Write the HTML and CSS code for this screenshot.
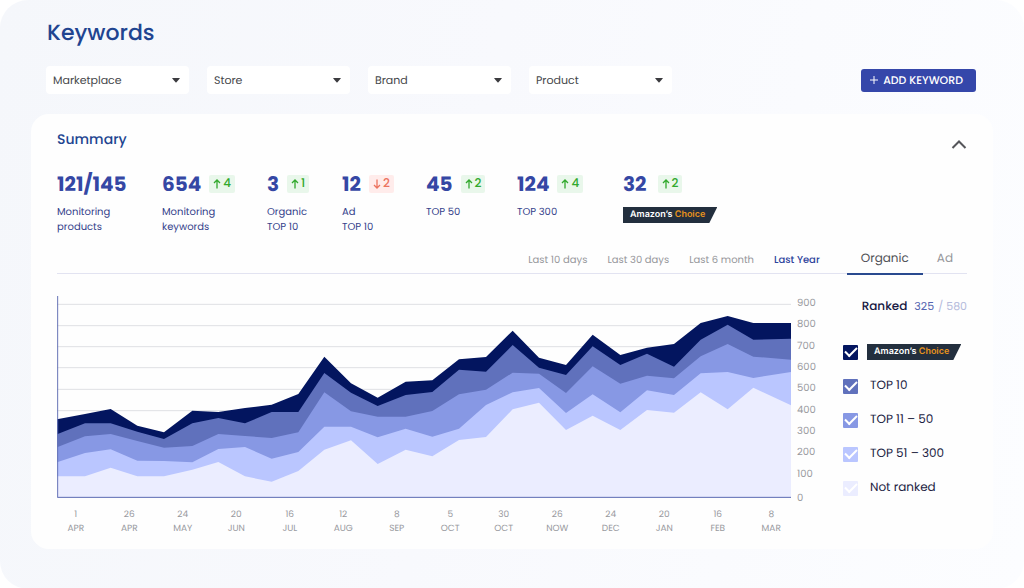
FILE: index.html
```html
<!DOCTYPE html>
<html lang="en">
<head>
<meta charset="utf-8">
<meta name="viewport" content="width=device-width, initial-scale=1">
<title>Keywords</title>
<link rel="stylesheet" href="styles.css">
</head>
<body>
<main class="page">
  <h1 class="page-title">Keywords</h1>
  <div class="toolbar">
    <div class="filters">
      <div class="filter"><select class="filter-select" aria-label="Marketplace"><option>Marketplace</option></select><svg class="caret" viewBox="0 0 8 5" aria-hidden="true"><path d="M0.5 0h7q.6 0 .2.5L4.5 4.2q-.5.5-1 0L.3.5Q-.1 0 .5 0z"/></svg></div>
      <div class="filter"><select class="filter-select" aria-label="Store"><option>Store</option></select><svg class="caret" viewBox="0 0 8 5" aria-hidden="true"><path d="M0.5 0h7q.6 0 .2.5L4.5 4.2q-.5.5-1 0L.3.5Q-.1 0 .5 0z"/></svg></div>
      <div class="filter"><select class="filter-select" aria-label="Brand"><option>Brand</option></select><svg class="caret" viewBox="0 0 8 5" aria-hidden="true"><path d="M0.5 0h7q.6 0 .2.5L4.5 4.2q-.5.5-1 0L.3.5Q-.1 0 .5 0z"/></svg></div>
      <div class="filter"><select class="filter-select" aria-label="Product"><option>Product</option></select><svg class="caret" viewBox="0 0 8 5" aria-hidden="true"><path d="M0.5 0h7q.6 0 .2.5L4.5 4.2q-.5.5-1 0L.3.5Q-.1 0 .5 0z"/></svg></div>
    </div>
    <button class="add-button" type="button"><svg class="plus" viewBox="0 0 8 8" aria-hidden="true"><path d="M4 0v8M0 4h8"/></svg>ADD KEYWORD</button>
  </div>

  <section class="card">
    <header class="card-head">
      <h2 class="card-title">Summary</h2>
      <button class="collapse" type="button" aria-label="Collapse"><svg class="chevron" viewBox="0 0 16 10" aria-hidden="true"><path d="M1.500 8.500L8 2l6.500 6.500"/></svg></button>
    </header>

    <div class="stats">
      <div class="stat"><div class="stat-top"><strong class="stat-value">121/145</strong></div><p class="stat-label">Monitoring<br>products</p></div>
      <div class="stat"><div class="stat-top"><strong class="stat-value">654</strong><span class="delta"><svg class="arrow" viewBox="0 0 8 10" aria-hidden="true"><path d="M4 9.500V1M1 4l3-3 3 3"/></svg>4</span></div><p class="stat-label">Monitoring<br>keywords</p></div>
      <div class="stat"><div class="stat-top"><strong class="stat-value">3</strong><span class="delta"><svg class="arrow" viewBox="0 0 8 10" aria-hidden="true"><path d="M4 9.500V1M1 4l3-3 3 3"/></svg>1</span></div><p class="stat-label">Organic<br>TOP 10</p></div>
      <div class="stat"><div class="stat-top"><strong class="stat-value">12</strong><span class="delta delta-down"><svg class="arrow" viewBox="0 0 8 10" aria-hidden="true"><path d="M4 .5V9M1 6l3 3 3-3"/></svg>2</span></div><p class="stat-label">Ad<br>TOP 10</p></div>
      <div class="stat"><div class="stat-top"><strong class="stat-value">45</strong><span class="delta"><svg class="arrow" viewBox="0 0 8 10" aria-hidden="true"><path d="M4 9.500V1M1 4l3-3 3 3"/></svg>2</span></div><p class="stat-label">TOP 50</p></div>
      <div class="stat"><div class="stat-top"><strong class="stat-value">124</strong><span class="delta"><svg class="arrow" viewBox="0 0 8 10" aria-hidden="true"><path d="M4 9.500V1M1 4l3-3 3 3"/></svg>4</span></div><p class="stat-label">TOP 300</p></div>
      <div class="stat"><div class="stat-top stat-top-wide"><strong class="stat-value">32</strong><span class="delta"><svg class="arrow" viewBox="0 0 8 10" aria-hidden="true"><path d="M4 9.500V1M1 4l3-3 3 3"/></svg>2</span></div><span class="choice">Amazon’s <span class="choice-accent">Choice</span></span></div>
    </div>

    <div class="tabs">
      <div class="ranges">
        <button class="range" type="button">Last 10 days</button>
        <button class="range" type="button">Last 30 days</button>
        <button class="range" type="button">Last 6 month</button>
        <button class="range range-active" type="button">Last Year</button>
      </div>
      <div class="kinds">
        <button class="kind kind-active" type="button">Organic</button>
        <button class="kind" type="button">Ad</button>
      </div>
    </div>

    <div class="report">
      <div class="chart">
        <div class="plot-row">
          <svg class="plot" viewBox="0 0 2202 606" preserveAspectRatio="none" role="img" aria-label="Keyword ranking over the last year">
            <g transform="translate(0,-33)">
              <path class="gridline" d="M0 58H2202M0 122H2202M0 185H2202M0 248H2202M0 313H2202M0 377H2202"/>
              <polygon fill="#03155f" points="0,403 84,387 161,372 241,422 321,442 406,377 484,381 564,369 644,359 724,327 802,215 882,295 962,338 1046,290 1126,286 1206,223 1287,216 1367,137 1446,218 1527,240 1607,149 1690,210 1770,188 1851,177 1931,114 2012,93 2089,114 2202,114 2202,637 0,637"/>
              <polygon fill="#6071bc" points="0,448 84,415 161,415 241,440 321,462 406,415 484,399 564,415 644,381 724,381 802,264 882,323 962,363 1046,330 1126,321 1206,254 1287,260 1367,180 1446,248 1527,270 1607,184 1690,240 1770,206 1851,245 1931,164 2012,119 2089,164 2202,161 2202,637 0,637"/>
              <polygon fill="#8798e4" points="0,487 84,454 161,447 241,468 321,488 406,483 484,447 564,453 644,459 724,442 802,322 882,379 962,395 1046,395 1126,378 1206,328 1287,314 1367,263 1446,266 1527,324 1607,244 1690,296 1770,272 1851,280 1931,214 2012,177 2089,215 2202,224 2202,637 0,637"/>
              <polygon fill="#bac6ff" points="0,532 84,504 161,493 241,527 321,528 406,532 484,492 564,486 644,521 724,501 802,425 882,425 962,457 1046,431 1126,455 1206,431 1287,360 1367,322 1446,309 1527,384 1607,328 1690,382 1770,316 1851,330 1931,265 2012,261 2089,279 2202,261 2202,637 0,637"/>
              <polygon fill="#ebedff" points="0,574 84,574 161,548 241,574 321,574 406,554 484,531 564,574 644,590 724,558 802,494 882,466 962,537 1046,494 1126,514 1206,465 1287,456 1367,373 1446,353 1527,435 1607,392 1690,435 1770,375 1851,383 1931,322 2012,373 2089,308 2202,361 2202,637 0,637"/>
              <path class="axis" d="M2 32V637H2202"/>
            </g>
          </svg>
          <div class="y-labels"><span>900</span><span>800</span><span>700</span><span>600</span><span>500</span><span>400</span><span>300</span><span>200</span><span>100</span><span class="y-zero">0</span></div>
        </div>
        <div class="x-labels"><span>1<br>APR</span><span>26<br>APR</span><span>24<br>MAY</span><span>20<br>JUN</span><span>16<br>JUL</span><span>12<br>AUG</span><span>8<br>SEP</span><span>5<br>OCT</span><span>30<br>OCT</span><span>26<br>NOW</span><span>24<br>DEC</span><span>20<br>JAN</span><span>16<br>FEB</span><span>8<br>MAR</span></div>
      </div>

      <aside class="legend">
        <p class="ranked"><strong class="ranked-title">Ranked</strong><span class="ranked-count">325</span><span>/ 580</span></p>
        <label class="series"><input class="tick tick-choice" type="checkbox" checked><span class="choice">Amazon’s <span class="choice-accent">Choice</span></span></label>
        <label class="series"><input class="tick tick-10" type="checkbox" checked><span class="series-name">TOP 10</span></label>
        <label class="series"><input class="tick tick-50" type="checkbox" checked><span class="series-name">TOP 11 – 50</span></label>
        <label class="series"><input class="tick tick-300" type="checkbox" checked><span class="series-name">TOP 51 – 300</span></label>
        <label class="series"><input class="tick tick-none" type="checkbox" checked><span class="series-name">Not ranked</span></label>
      </aside>
    </div>
  </section>
</main>
</body>
</html>
```
FILE: styles.css
```css
* { box-sizing: border-box; }
body { margin: 0; background: #fff; font-family: Poppins, Inter, "Open Sans", sans-serif; color: #3a3c40; text-rendering: geometricPrecision; }
button, select { font: inherit; text-rendering: inherit; border: 0; background: none; padding: 0; margin: 0; cursor: pointer; }
h1, h2, p { margin: 0; }

.page { min-height: 100vh; padding: 17px 31px 40px; border-radius: 28px; background: linear-gradient(100deg, #f5f7fb 0%, #f8f9fd 45%, #fcfdff 100%); }
.page-title { padding-left: 16px; font-size: 22px; line-height: 32px; font-weight: 500; color: #214490; }

.toolbar { display: flex; align-items: center; justify-content: space-between; gap: 18px; margin-top: 17px; padding: 0 17px 0 15px; }
.filters { display: flex; gap: 18px; }
.filter { display: grid; align-items: center; width: 143px; border-radius: 4px; background: #fff; }
.filter-select { grid-area: 1 / 1; appearance: none; width: 100%; height: 28px; padding: 0 24px 0 7px; font-size: 11px; color: #45474a; }
.caret { grid-area: 1 / 1; justify-self: end; width: 8px; height: 5px; margin-right: 9px; fill: #3b3b3f; pointer-events: none; }
.add-button { display: flex; align-items: center; gap: 5px; height: 23px; padding: 0 13px 0 9px; border-radius: 3px; background: #3547aa; color: #fff; font-size: 11px; font-weight: 500; white-space: nowrap; }
.plus { width: 8px; height: 8px; stroke: #fff; stroke-width: 1; fill: none; }

.card { margin-top: 20px; padding: 14px 26px 13px; border-radius: 18px; background: #fefefe; }
.card-head { display: flex; justify-content: space-between; align-items: flex-start; }
.card-title { font-size: 14px; line-height: 22px; font-weight: 500; color: #214490; }
.collapse { margin-top: 11px; height: 11px; }
.chevron { display: block; width: 16px; height: 11px; stroke: #55565a; stroke-width: 2; fill: none; }

.stats { display: grid; grid-template-columns: 105px 105px 75px 84px 91px 106px auto; margin-top: 22px; min-height: 64px; }
.stat-top { display: flex; align-items: center; gap: 8px; height: 24px; }
.stat-top-wide { gap: 11px; }
.stat-value { font-size: 20px; line-height: 24px; font-weight: 700; color: #3547a4; }
.delta { display: flex; align-items: center; gap: 2px; height: 18px; padding: 0 4px; border-radius: 2px; background: #e9f7eb; color: #32a92e; font-size: 12px; font-weight: 500; }
.delta-down { background: #ffeceb; color: #ec735f; }
.arrow { width: 8px; height: 10px; fill: none; stroke: currentColor; stroke-width: 1.3; }
.stat-label { margin-top: 8px; font-size: 10px; line-height: 15px; color: #35428b; }
.choice { display: inline-block; height: 16px; padding: 0 12px 0 7px; background: #232f3e; clip-path: polygon(0 0, 100% 0, calc(100% - 8px) 100%, 0 100%); color: #fff; font-family: Inter, "Open Sans", sans-serif; font-size: 9px; line-height: 16px; font-weight: 600; white-space: nowrap; }
.stat .choice { margin-top: 11px; }
.choice-accent { color: #e6921c; }

.tabs { display: flex; justify-content: flex-end; align-items: stretch; gap: 27px; height: 32px; margin-top: 6px; border-bottom: 1px solid #e2e3f1; }
.ranges { display: flex; gap: 20px; padding-top: 4px; }
.range { font-size: 10px; color: #96979b; }
.range-active { color: #2e449c; font-weight: 500; }
.kinds { display: flex; }
.kind { padding: 2px 14px 0; font-size: 12px; color: #96979b; }
.kind-active { margin-bottom: -2px; border-bottom: 2px solid #294a8f; color: #505256; }

.report { display: flex; gap: 27px; margin-top: 22px; }
.chart { flex: 1; min-width: 0; }
.plot-row { display: flex; gap: 6px; }
.plot { display: block; flex: 1; min-width: 0; height: 202px; }
.gridline { fill: none; stroke: #dfe0e4; stroke-width: 3; }
.axis { fill: none; stroke: #6673b6; stroke-width: 3; }
.y-labels { display: flex; flex-direction: column; justify-content: space-between; width: 19px; height: 209px; font-size: 10px; line-height: 14px; color: #999a9e; }
.y-zero { padding-top: 3px; }
.x-labels { display: grid; grid-template-columns: repeat(14, 1fr); margin: 3px 18px 0 -8px; font-size: 9px; line-height: 14px; color: #999a9e; text-align: center; }

.legend { display: flex; flex-direction: column; width: 124px; }
.ranked { display: flex; justify-content: flex-end; align-items: baseline; gap: 4px; height: 20px; margin-bottom: 28px; line-height: 20px; font-size: 11px; color: #b5bbdc; white-space: nowrap; }
.ranked-title { margin-right: 3px; font-size: 12px; font-weight: 500; color: #171943; }
.ranked-count { color: #5465b0; }
.series { display: flex; align-items: center; height: 16px; margin-bottom: 18px; gap: 9px; cursor: pointer; }
.series-name { padding-left: 3px; font-size: 12px; line-height: 16px; color: #1c1d43; white-space: nowrap; }
.tick { appearance: none; display: grid; place-items: center; flex: none; width: 15px; height: 15px; margin: 0; border-radius: 1px; cursor: pointer; }
.tick:checked::before { content: ""; width: 10px; height: 5px; margin-top: -3px; border: solid #fff; border-width: 0 0 2px 2px; transform: rotate(-45deg); }
.tick-choice { background: #03155f; }
.tick-10 { background: #6071bc; }
.tick-50 { background: #8798e4; }
.tick-300 { background: #bac6ff; }
.tick-none { background: #ebedff; }
```
